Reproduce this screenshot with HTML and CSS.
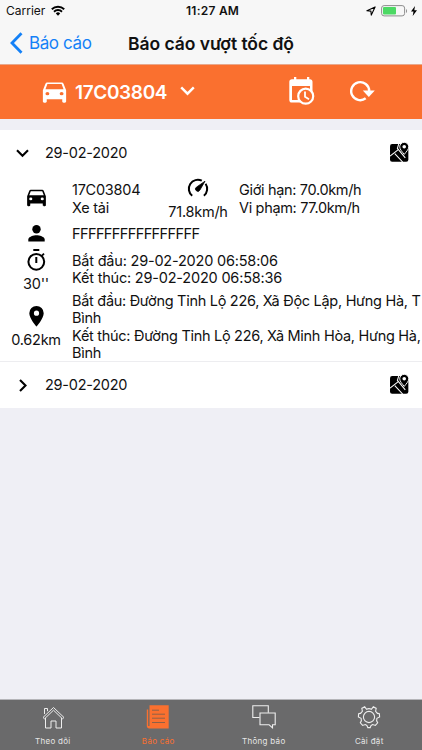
FILE: index.html
```html
<!DOCTYPE html>
<html lang="vi">
<head>
  <meta charset="UTF-8">
  <meta name="viewport" content="width=device-width, initial-scale=1.0">
  <title>Báo cáo vượt tốc độ</title>
  <link rel="stylesheet" href="styles.css">
</head>
<body>
  <svg class="defs">
    <symbol id="car" viewBox="0 0 24 24"><path fill-rule="evenodd" d="M18.92 4.01C18.72 3.42 18.16 3 17.5 3h-11c-.66 0-1.21.42-1.42 1.01L3 10v10c0 .55.45 1 1 1h1c.55 0 1-.45 1-1v-2h12v2c0 .55.45 1 1 1h1c.55 0 1-.45 1-1V10l-2.08-5.99zM6.5 14.5a1.5 1.5 0 1 1 0-3 1.5 1.5 0 0 1 0 3zm11 0a1.5 1.5 0 1 1 0-3 1.5 1.5 0 0 1 0 3zM5 9l1.5-4.5h11L19 9H5z"/></symbol>
    <symbol id="map" viewBox="0 0 18 19">
      <rect x="0" y="2" width="17.4" height="16.8" rx="2" fill="#000"/>
      <path d="M8.500 1L7 6l7.500 9M0 13.500L7.500 7.500M4.500 11l7.500 8" fill="none" stroke="#fff" stroke-width="1"/>
      <path d="M13.500 0.300a4.300 4.300 0 0 1 4.300 4.300c0 2.600-2.600 4.800-4.300 7.200-1.700-2.400-4.300-4.600-4.300-7.200a4.300 4.300 0 0 1 4.300-4.300z" fill="#000" stroke="#fff" stroke-width=".9"/>
      <circle cx="13.500" cy="4.500" r="1.700" fill="#fff"/>
    </symbol>
  </svg>

  <div class="status-bar">
    <span class="carrier">Carrier</span>
    <svg class="wifi" width="14" height="11" viewBox="0 0 14 11"><g fill="none" stroke="#000" stroke-width="1.9"><path d="M.8 4.200a8.900 8.900 0 0 1 12.400 0"/><path d="M3 6.700a5.700 5.700 0 0 1 8 0"/></g><path d="M4.800 8.400a3.200 3.200 0 0 1 4.400 0L7 10.700z"/></svg>
    <span class="clock">11:27 AM</span>
    <span class="status-right">
      <svg width="10" height="10" viewBox="0 0 10 10"><path d="M9.100.9L.9 4.700l4 .4.400 4z" fill="none" stroke="#000" stroke-width="1.100" stroke-linejoin="round"/></svg>
      <svg class="battery" width="27" height="12" viewBox="0 0 27 12"><rect x=".6" y=".6" width="23" height="10.300" rx="2.500" fill="none" stroke="#8d8d8d"/><rect x="2" y="2" width="13" height="7.500" rx="1" fill="#4cd964"/><path d="M25 4v4c1.400-.7 1.400-3.300 0-4z" fill="#8d8d8d"/></svg>
      <svg width="6" height="10" viewBox="0 0 6 10"><path d="M4 0L0 5.500h2.500L1.700 10 6 4.300H3.300z"/></svg>
    </span>
  </div>

  <div class="nav-bar">
    <svg class="back-icon" width="13" height="22" viewBox="0 0 13 22"><path d="M11.500 1.300L2 11l9.500 9.700" fill="none" stroke="#1481f7" stroke-width="2.800"/></svg>
    <span class="back">Báo cáo</span>
    <span class="title">Báo cáo vượt tốc độ</span>
  </div>

  <div class="toolbar">
    <svg class="car-icon" width="31" height="27" viewBox="0 0 24 24" preserveAspectRatio="none"><use href="#car"/></svg>
    <span class="plate">17C03804</span>
    <svg class="down-icon" width="15" height="10" viewBox="0 0 15 10"><path d="M1.200 1.300l6.300 6.400 6.300-6.400" fill="none" stroke="#fff" stroke-width="2.400"/></svg>
    <svg class="calendar-icon" width="27" height="29" viewBox="0 0 27 29">
      <path d="M5 0h2.300v2.300H18V0h2.300v2.300H21c1.500 0 2.500 1 2.500 2.500V15H21V9H3v14h8v2.600H3c-1.700 0-2.700-1-2.700-2.600V4.800c0-1.500 1-2.500 2.700-2.500h2z"/>
      <circle cx="16.700" cy="19.200" r="7.500" fill="#fa702f" stroke="#fff" stroke-width="2.200"/>
      <path d="M16 14.500v5.200l4 2.600" fill="none" stroke="#fff" stroke-width="1.800"/>
    </svg>
    <svg class="reload-icon" width="25" height="22" viewBox="0 0 25 22"><path d="M15.700 18.300A9 9 0 1 1 19.200 11" fill="none" stroke="#fff" stroke-width="2.400"/><path d="M12.800 10.500h12l-6 6.500z"/></svg>
  </div>

  <div class="list">
    <div class="card open">
      <div class="card-header">
        <svg class="toggle" width="13" height="9" viewBox="0 0 13 9"><path d="M1 1.200l5.500 5.500L12 1.200" fill="none" stroke="#000" stroke-width="2.100"/></svg>
        <span class="date">29-02-2020</span>
        <svg class="map-icon" width="19" height="20"><use href="#map"/></svg>
      </div>
      <div class="row vehicle">
        <div class="icon-col"><svg width="25" height="22" viewBox="0 0 24 24" preserveAspectRatio="none"><use href="#car"/></svg></div>
        <div class="name">17C03804<br>Xe tải</div>
        <div class="speed">
          <svg width="22" height="20" viewBox="0 0 22 20"><g fill="none" stroke="#000" stroke-width="2"><path d="M5.200 17.800A9 9 0 0 1 14.800 2.700"/><path d="M18.600 5.800a9 9 0 0 1-1.700 12"/></g><path d="M18 3.200l-5.200 9a2.300 2.300 0 1 1-3.400-3z" stroke="#000" stroke-width=".8"/></svg>
          <span>71.8km/h</span>
        </div>
        <div class="limits">Giới hạn: 70.0km/h<br>Vi phạm: 77.0km/h</div>
      </div>
      <div class="row driver">
        <div class="icon-col"><svg width="17" height="17" viewBox="0 0 17 17"><circle cx="8.500" cy="4.300" r="4.200"/><path d="M.3 16.500v-2c0-2.800 5.500-4.200 8.200-4.200s8.200 1.400 8.200 4.200v2z"/></svg></div>
        <div class="driver-name">FFFFFFFFFFFFFFFF</div>
      </div>
      <div class="row time">
        <div class="icon-col">
          <svg width="19" height="22" viewBox="0 0 19 22"><circle cx="9.300" cy="12.800" r="7.900" fill="none" stroke="#000" stroke-width="2"/><path d="M6.300 0h6v2h-6zM8.300 8h2v6h-2z"/><path d="M15 6.700l2-2" stroke="#000" stroke-width="1.700"/></svg>
          <span>30''</span>
        </div>
        <div class="times">Bắt đầu: 29-02-2020 06:58:06<br>Kết thúc: 29-02-2020 06:58:36</div>
      </div>
      <div class="row place">
        <div class="icon-col">
          <svg width="15" height="21" viewBox="0 0 15 21"><path fill-rule="evenodd" d="M7.500 0A7.200 7.200 0 0 0 .3 7.200C.3 12.500 7.500 20.500 7.500 20.500s7.200-8 7.200-13.300A7.200 7.200 0 0 0 7.500 0zm0 9.800a2.600 2.600 0 1 1 0-5.200 2.600 2.600 0 0 1 0 5.200z"/></svg>
          <span>0.62km</span>
        </div>
        <div class="address">Bắt đầu: Đường Tỉnh Lộ 226, Xã Độc Lập, Hưng Hà, T<br>Bình<br>Kết thúc: Đường Tỉnh Lộ 226, Xã Minh Hòa, Hưng Hà,<br>Bình</div>
      </div>
    </div>

    <div class="card">
      <div class="card-header">
        <svg class="toggle" width="13" height="13" viewBox="0 0 13 13"><path d="M4 1l5.500 5.500L4 12" fill="none" stroke="#000" stroke-width="2.100"/></svg>
        <span class="date">29-02-2020</span>
        <svg class="map-icon" width="19" height="20"><use href="#map"/></svg>
      </div>
    </div>
  </div>

  <div class="tab-bar">
    <div class="tab">
      <svg width="24" height="24" viewBox="0 0 24 24" fill="none" stroke="#eee" stroke-width="1"><path d="M2 12.500L12.500 2.500 23 12.500l-1.500 1.300L12.500 5.200l-9 8.600zM3.500 9V3.500h3v2.700M4.500 13v10h5.500v-7h5v7h5.500V13"/></svg>
      <span>Theo dõi</span>
    </div>
    <div class="tab active">
      <svg width="24" height="24" viewBox="0 0 24 24"><path d="M3.500.3h19.200v23.200H3.300C1.800 23.500.8 22.500.8 21V4.500h1.400V21h1.300z"/><path d="M6 5.200h7M6 9.200h13M6 13.200h13M6 17.500h13" stroke="#8d6048" stroke-width="1"/></svg>
      <span>Báo cáo</span>
    </div>
    <div class="tab">
      <svg width="24" height="24" viewBox="0 0 24 24" fill="none" stroke="#eee" stroke-width="1.100"><path d="M7.500 12.500H.8V.8h15.500v7"/><path d="M8 8h15.200v11.800h-2.700v3l-3.400-3H8z"/></svg>
      <span>Thông báo</span>
    </div>
    <div class="tab">
      <svg width="24" height="24" viewBox="0 0 24 24" fill="none" stroke="#eee" stroke-width="1.100"><circle cx="12" cy="12" r="5.600"/><path d="M9.600 4.300Q12 3 14.400 4.300L16.300 1.800 19.200 3.400 18.600 6.200Q19.600 8.500 22.400 8.800L22.600 12 19.900 13.300Q19 15.500 20.700 17.800L18.400 20.400 15.600 19.500Q13.600 20.200 13.200 22.600H10.800Q10.400 20.200 8.400 19.500L5.600 20.400 3.300 17.800Q5 15.500 4.100 13.300L1.400 12 1.600 8.800Q4.400 8.500 5.400 6.200L4.800 3.400 7.700 1.800z"/></svg>
      <span>Cài đặt</span>
    </div>
  </div>
</body>
</html>
```

FILE: styles.css
```css
* {
  box-sizing: border-box;
}
body {
  margin: 0;
  width: 422px;
  height: 750px;
  overflow: hidden;
  display: flex;
  flex-direction: column;
  background: #efeff5;
  color: #111;
  font-family: Inter, "Noto Sans", sans-serif;
  font-size: 14.5px;
  line-height: 17.25px;
  letter-spacing: -0.25px;
}
svg {
  display: block;
  flex: none;
}
.defs {
  position: absolute;
  width: 0;
  height: 0;
}
.status-bar {
  height: 22px;
  background: #f7f7f7;
  display: grid;
  grid-template-columns: 45px 130px 74px 1fr;
  align-items: center;
  padding-left: 6px;
  font-size: 12px;
  letter-spacing: 0;
  white-space: nowrap;
}
.wifi {
  margin-top: -1px;
}
.clock {
  font-weight: 600;
  margin-left: 5px;
  letter-spacing: 0.25px;
}
.status-right {
  display: flex;
  align-items: center;
  justify-content: flex-end;
  gap: 5px;
  padding-right: 5px;
}
.battery {
  margin-right: -2px;
}
.nav-bar {
  height: 43px;
  background: #f7f7f7;
  border-bottom: 1px solid #e8a88c;
  display: flex;
  align-items: center;
  padding-left: 10px;
  white-space: nowrap;
}
.back {
  width: 93px;
  margin-left: 6px;
  padding-top: 1px;
  font-size: 17px;
  letter-spacing: -0.4px;
  color: #1481f7;
}
.title {
  margin-left: 6px;
  padding-top: 1px;
  font-size: 17.5px;
  font-weight: 600;
  letter-spacing: -0.05px;
}
.toolbar {
  height: 54px;
  background: #fa702f;
  fill: #fff;
  color: #fff;
  display: flex;
  align-items: center;
  padding-left: 39px;
}
.plate {
  width: 93px;
  margin-left: 5px;
  padding-top: 2px;
  font-size: 19px;
  font-weight: 600;
  letter-spacing: -0.35px;
}
.down-icon {
  margin-left: 12px;
  margin-top: -3px;
}
.calendar-icon {
  margin-left: 94px;
  margin-top: -2px;
}
.reload-icon {
  margin-left: 34px;
  margin-top: -2px;
}
.list {
  flex: 1;
  padding-top: 11px;
}
.card {
  background: #fff;
}
.open {
  height: 232px;
  border-bottom: 1px solid #ededf0;
}
.card-header {
  height: 46px;
  display: flex;
  align-items: center;
  padding: 0 13px 0 16px;
}
.date {
  flex: 1;
  margin-left: 16px;
}
.map-icon {
  margin-top: -2px;
}
.row {
  display: flex;
  white-space: nowrap;
}
.icon-col {
  width: 72px;
  flex: none;
  display: flex;
  flex-direction: column;
  align-items: center;
}
.vehicle {
  height: 47px;
  padding-top: 5px;
  line-height: 17.75px;
}
.vehicle .icon-col {
  padding-top: 6px;
}
.name {
  width: 95px;
}
.speed {
  width: 62px;
  margin-top: -3px;
  display: flex;
  flex-direction: column;
  align-items: center;
  gap: 5px;
}
.limits {
  margin-left: 10px;
  letter-spacing: -0.33px;
}
.driver {
  height: 26px;
  padding-top: 2px;
}
.driver-name {
  letter-spacing: -0.6px;
}
.time {
  height: 43px;
}
.times {
  padding-top: 3px;
  letter-spacing: -0.2px;
}
.time .icon-col {
  gap: 4px;
}
.place .icon-col {
  padding-top: 14px;
  gap: 4px;
}
.address {
  letter-spacing: -0.29px;
}
.tab-bar {
  height: 51px;
  background: #6a6a6b;
  border-top: 1px solid #b5b5b9;
  display: grid;
  grid-template-columns: repeat(4, 1fr);
}
.tab {
  display: flex;
  flex-direction: column;
  align-items: center;
  padding-top: 5px;
  color: #e6e6e6;
  font-size: 8px;
  line-height: 10px;
  letter-spacing: 0.3px;
}
.tab span {
  margin-top: 7px;
}
.active {
  color: #fa702f;
  fill: #fa702f;
}
```
